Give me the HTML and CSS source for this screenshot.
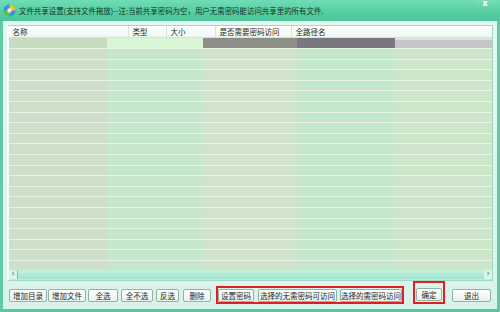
FILE: index.html
```html
<!DOCTYPE html>
<html lang="zh-CN">
<head>
    <meta charset="UTF-8">
    <title>文件共享设置</title>
    <link rel="stylesheet" href="styles.css">
</head>
<body>
<div class="window">
    <div class="titlebar">
        <svg class="app-icon" width="13" height="13" viewBox="0 0 13 13">
            <circle cx="6.5" cy="6.5" r="6" fill="#3a8fd8"/>
            <path d="M6.5 0.5 A6 6 0 0 1 12.5 6.5 L6.5 6.5 Z" fill="#f2c42c"/>
            <path d="M0.5 6.5 A6 6 0 0 0 6.5 12.5 L6.5 6.5 Z" fill="#5fc24a"/>
            <circle cx="6.5" cy="6.5" r="2.2" fill="#ffffff" opacity="0.8"/>
        </svg>
        <span class="title">文件共享设置(支持文件拖放)--注:当前共享密码为空，用户无需密码能访问共享里的所有文件.</span>
        <span class="close">x</span>
    </div>

    <div class="content">
        <div class="list">
            <div class="list-head">
                <div class="col c-name">名称</div>
                <div class="col c-type">类型</div>
                <div class="col c-size">大小</div>
                <div class="col c-pass">是否需要密码访问</div>
                <div class="col c-path">全路径名</div>
            </div>
            <div class="list-body">
                <div class="band b1"><div class="first"></div></div>
                <div class="band b2"><div class="first"></div></div>
                <div class="band b3"><div class="first"></div></div>
                <div class="band b4"><div class="first"></div></div>
                <div class="band b5"><div class="first"></div></div>
            </div>
            <div class="hscroll">
                <span class="arrow">&lsaquo;</span>
                <span class="thumb"></span>
                <span class="arrow">&rsaquo;</span>
            </div>
        </div>

        <div class="buttons">
            <button class="btn w-dir">增加目录</button>
            <button class="btn w-file">增加文件</button>
            <button class="btn w-all">全选</button>
            <button class="btn w-none">全不选</button>
            <button class="btn w-inv">反选</button>
            <button class="btn w-del">删除</button>
            <div class="mark mark-group">
                <button class="btn w-pwd">设置密码</button>
                <button class="btn w-free">选择的无需密码可访问</button>
                <button class="btn w-need">选择的需密码访问</button>
            </div>
            <div class="mark mark-ok">
                <button class="btn w-ok">确定</button>
            </div>
            <button class="btn w-exit">退出</button>
        </div>
    </div>
</div>
</body>
</html>
```

FILE: styles.css
```css
* {
    box-sizing: border-box;
}

body {
    margin: 0;
    padding: 0;
    width: 500px;
    height: 312px;
    overflow: hidden;
    font-family: "Noto Sans CJK SC", "Noto Sans", sans-serif;
    font-size: 7.5px;
    color: #1e2a24;
}

.window {
    width: 500px;
    height: 312px;
    display: flex;
    flex-direction: column;
    background: #dff6ee;
    border-left: 3px solid #62c9a6;
    border-right: 3px solid #62c9a6;
    border-bottom: 3px solid #5cc4a0;
}

.titlebar {
    height: 21px;
    margin: 0 -3px;
    padding: 0 0 0 3px;
    display: flex;
    align-items: center;
    background: linear-gradient(to bottom, #70dcb6, #54cea0 60%, #4cc698);
    position: relative;
}

.app-icon {
    flex: none;
    margin-right: 3px;
}

.title {
    font-size: 7.45px;
    color: #16322a;
    white-space: nowrap;
}

.close {
    position: absolute;
    right: 4px;
    top: 0;
    width: 22px;
    height: 10px;
    line-height: 8px;
    text-align: center;
    font-family: "DejaVu Sans", sans-serif;
    font-size: 8px;
    font-weight: bold;
    color: #ffffff;
    background: linear-gradient(to bottom, #7cdcbc, #5ccfa6);
    border-radius: 0 0 2px 2px;
}

.content {
    flex: 1;
    display: flex;
    flex-direction: column;
    padding: 4px;
    background: linear-gradient(to bottom, #e4f8f1, #d9f3ea);
}

.list {
    height: 256px;
    display: flex;
    flex-direction: column;
    border: 1px solid #9ed8c4;
    border-left: 2px solid #f4fffb;
    background: #cfe6d0;
}

.list-head {
    height: 12px;
    display: flex;
    background: linear-gradient(to bottom, #ffffff, #eef8f3);
    border-bottom: 1px solid #cfe4da;
}

.col {
    padding-left: 3.5px;
    line-height: 11px;
    border-right: 1px solid #d6e4de;
    white-space: nowrap;
}

.c-name { width: 120px; }
.c-type { width: 38px; }
.c-size { width: 49px; }
.c-pass { width: 76px; }
.c-path { flex: 1; border-right: none; }

.list-body {
    flex: 1;
    display: flex;
    position: relative;
}

.list-body::after {
    content: "";
    position: absolute;
    left: 0;
    right: 0;
    top: 10px;
    bottom: 0;
    background: repeating-linear-gradient(to bottom, rgba(238, 248, 238, 0.8) 0, rgba(238, 248, 238, 0.8) 1px, transparent 1px, transparent 10.6px);
}

.band {
    flex: none;
    height: 100%;
}

.first {
    height: 10px;
}

.b1 { width: 98px; background: #cfdfca; }
.b2 { width: 96px; background: #c7e7cc; }
.b3 { width: 94px; background: #d1e3ca; }
.b4 { width: 98px; background: #c5e8cc; }
.b5 { flex: 1; background: #cde6c9; }

.b1 .first { background: #c6dbc2; }
.b2 .first { background: #d8f5d6; }
.b3 .first { background: #8d8e87; }
.b4 .first { background: #7b7780; }
.b5 .first { background: linear-gradient(to bottom, #e0e0e2 0, #e0e0e2 2px, #c6c6ca 2px); }

.hscroll {
    height: 9px;
    margin-bottom: 1px;
    display: flex;
    align-items: stretch;
    background: #a6e6ce;
}

.arrow {
    width: 8px;
    line-height: 8px;
    text-align: center;
    font-family: "DejaVu Sans", sans-serif;
    font-size: 8px;
    color: #3a7a66;
    background: #d6f4ea;
}

.thumb {
    flex: 1;
    border-left: 1px solid #7cc8ae;
    background: linear-gradient(to bottom, #c2f2e0, #a4e4cc);
}

.buttons {
    display: flex;
    align-items: center;
    margin-top: 5px;
    padding-left: 2px;
}

.btn {
    height: 13px;
    padding: 0;
    font-family: inherit;
    font-size: 7.5px;
    line-height: 11px;
    color: #1e2a24;
    background: linear-gradient(to bottom, #ffffff, #e8f2ee);
    border: 1px solid #8fb4a6;
    border-radius: 2px;
}

.w-dir { width: 38px; margin-right: 1px; }
.w-file { width: 38px; margin-right: 2px; }
.w-all { width: 30px; margin-right: 3px; }
.w-none { width: 32px; margin-right: 3px; }
.w-inv { width: 23px; margin-right: 4px; }
.w-del { width: 28px; margin-right: 5px; }
.w-pwd { width: 36px; margin-right: 4px; }
.w-free { width: 79px; margin-right: 3px; }
.w-need { width: 62px; }
.w-ok { width: 26px; }
.w-exit { width: 39px; margin-left: 7px; }

.mark {
    display: flex;
    align-items: center;
    border: 2px solid #e02020;
}

.mark-group {
    height: 18px;
    margin-right: 9px;
}

.mark-ok {
    height: 23px;
    padding: 0 1px 1px 1px;
    margin-top: -6px;
    align-items: flex-end;
}
```
